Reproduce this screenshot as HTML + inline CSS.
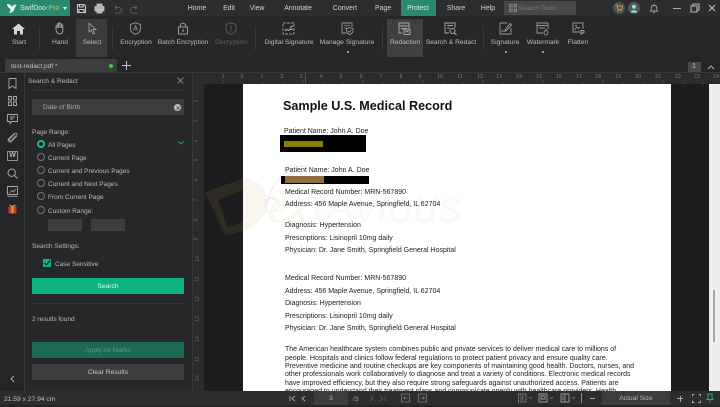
<!DOCTYPE html>
<html><head><meta charset="utf-8">
<style>
html,body{margin:0;padding:0;width:720px;height:405px;overflow:hidden;background:#242527;font-family:"Liberation Sans",sans-serif}
.a,.t,.d{position:absolute;white-space:nowrap}
.t{color:#b9babb;font-size:6.6px;line-height:10px;margin-top:1px}
.m{color:#d0d1d2;font-size:6.9px;line-height:10px;position:absolute;transform:translateX(-50%);top:4px}
.c{transform:translateX(-50%);text-align:center;top:38px;position:absolute;color:#b9babb;font-size:6.7px;line-height:10px;white-space:nowrap}
.d{color:#222;font-size:7px;line-height:10px;left:285px;margin-top:1px}
.r{position:absolute;width:8px;height:8px;border:1px solid #77787a;border-radius:50%;box-sizing:border-box}
.rt{position:absolute;left:48px;color:#b9babb;font-size:6.5px;line-height:10px;white-space:nowrap;margin-top:1.5px}
svg{position:absolute;overflow:visible}
.n{position:absolute;top:73px;color:#77787a;font-size:5.5px;line-height:8px;transform:translateX(-50%)}
.v{position:absolute;left:195px;color:#66676a;font-size:5px;line-height:6px;transform:rotate(-90deg)}
</style></head><body>
<!-- top bar -->
<div class="a" style="left:0;top:0;width:720px;height:16px;background:#2c2d2f"></div>
<div class="a" style="left:0;top:0;width:70px;height:16px;background:#2a8a6e"></div>
<svg style="left:6px;top:2px" width="12" height="12" viewBox="0 0 12 12"><path d="M1 2C4 2 5 3 6 5C7 3 9 2 11 3C9 4 9 6 8 8C7 10 5 11 3 11C5 9 5 7 3 6C2 5 1 4 1 2Z" fill="#e8f5f0"/></svg>
<div class="a" style="left:20px;top:4px;font-size:7px;line-height:10px;color:#d9ece6">SwifDoo<span style="color:#c8c96a">-Pro</span></div>
<div class="a" style="left:63px;top:7px;border:2.5px solid transparent;border-top:3px solid #dfe;border-bottom:0"></div>
<svg style="left:76px;top:3px" width="11" height="11" viewBox="0 0 11 11"><path d="M1.5 1.5H8L9.5 3V9.5H1.5Z M3.5 1.5V4H7V1.5 M3 9.5V6.5H8V9.5" fill="none" stroke="#c9cacb" stroke-width="1.1"/></svg>
<svg style="left:94px;top:3px" width="11" height="11" viewBox="0 0 11 11"><path d="M3 3V1H8V3 M1 3.5H10V8H8V6.5H3V8H1Z M3 6.5V10H8V6.5" fill="#b5b6b7" stroke="#c9cacb" stroke-width=".8"/></svg>
<svg style="left:112px;top:3px" width="11" height="11" viewBox="0 0 11 11"><path d="M3 4.5H7A2.7 2.7 0 0 1 7 10H3 M3 4.5L5 2.5 M3 4.5L5 6.5" fill="none" stroke="#5b5c5e" stroke-width="1"/></svg>
<svg style="left:129px;top:3px" width="11" height="11" viewBox="0 0 11 11"><path d="M8 4.5H4A2.7 2.7 0 0 0 4 10H8 M8 4.5L6 2.5 M8 4.5L6 6.5" fill="none" stroke="#5b5c5e" stroke-width="1"/></svg>
<div class="m" style="left:197px">Home</div>
<div class="m" style="left:229px">Edit</div>
<div class="m" style="left:257px">View</div>
<div class="m" style="left:298px">Annotate</div>
<div class="m" style="left:345px">Convert</div>
<div class="m" style="left:383px">Page</div>
<div class="a" style="left:401px;top:0;width:35px;height:16px;background:#2a8a6e"></div>
<div class="m" style="left:418px;color:#d6eee6">Protect</div>
<div class="m" style="left:456px">Share</div>
<div class="m" style="left:488px">Help</div>
<div class="a" style="left:504px;top:1px;width:72px;height:14px;background:#47484a"></div>
<svg style="left:509px;top:4px" width="8" height="8" viewBox="0 0 8 8"><path d="M.5 .5H3V3H.5Z M5 .5H7.5V3H5Z M.5 5H3V7.5H.5Z M5 5H7.5V7.5H5Z" fill="none" stroke="#98999a" stroke-width=".8"/></svg>
<div class="a" style="left:518px;top:4px;font-size:6.6px;line-height:10px;color:#77787a">Search Tools</div>
<div class="a" style="left:613px;top:2px;width:12px;height:12px;border-radius:50%;background:#4e4f4f"></div>
<svg style="left:615px;top:4px" width="8" height="8" viewBox="0 0 8 8"><path d="M.5 1H2L3 5.5H6.5L7.5 2H2.3" fill="none" stroke="#c79a2e" stroke-width="1"/><circle cx="3.2" cy="7" r=".8" fill="#c79a2e"/><circle cx="6" cy="7" r=".8" fill="#c79a2e"/></svg>
<div class="a" style="left:628px;top:2px;width:12px;height:12px;border-radius:50%;background:#55575a"></div>
<svg style="left:630px;top:3.5px" width="8" height="9" viewBox="0 0 8 9"><circle cx="4" cy="2.7" r="2" fill="#8fe6cf"/><path d="M.8 8.5C1 5.5 7 5.5 7.2 8.5Z" fill="#8fe6cf"/></svg>
<svg style="left:649px;top:3px" width="10" height="11" viewBox="0 0 10 11"><path d="M1.5 8C2.5 7 2.3 5.5 2.5 4C2.8 2 7.2 2 7.5 4C7.7 5.5 7.5 7 8.5 8Z M4 9.5H6 M5 1V2" fill="none" stroke="#a6a7a8" stroke-width=".9"/></svg>
<div class="a" style="left:673px;top:8px;width:8px;height:1px;background:#a9aaab"></div>
<svg style="left:690px;top:3px" width="10" height="10" viewBox="0 0 10 10"><path d="M3 3V1H9V7H7 M1 3H7V9H1Z" fill="none" stroke="#b5b6b7" stroke-width="1.1"/></svg>
<svg style="left:708px;top:4px" width="8" height="8" viewBox="0 0 8 8"><path d="M1 1L7 7M7 1L1 7" stroke="#c6c7c8" stroke-width="1"/></svg>

<!-- ribbon -->
<div class="a" style="left:0;top:16px;width:720px;height:41px;background:#262729"></div>
<div class="a" style="left:76px;top:19px;width:31px;height:38px;background:#3a3b3d"></div>
<div class="a" style="left:387px;top:19px;width:36px;height:38px;background:#3f4042"></div>
<div class="a" style="left:39px;top:26px;width:1px;height:24px;background:#38393b"></div>
<div class="a" style="left:112px;top:26px;width:1px;height:24px;background:#38393b"></div>
<div class="a" style="left:255px;top:26px;width:1px;height:24px;background:#38393b"></div>
<div class="a" style="left:382px;top:26px;width:1px;height:24px;background:#38393b"></div>
<div class="a" style="left:483px;top:26px;width:1px;height:24px;background:#38393b"></div>
<!-- icons -->
<svg style="left:12px;top:23px" width="13" height="12" viewBox="0 0 13 12"><path d="M6.5 .5L13 6H11V11.5H8V8H5V11.5H2V6H0Z" fill="#d3d4d5"/></svg>
<svg style="left:54px;top:22px" width="12" height="13" viewBox="0 0 12 13"><path d="M2 8V4.5C2 3.5 3.2 3.5 3.2 4.5V2.5C3.2 1.5 4.6 1.5 4.6 2.5V1.5C4.6 .5 6 .5 6 1.5V2.5C6 1.5 7.4 1.5 7.4 2.5V3.5C7.4 2.7 8.8 2.7 8.8 3.5V8C8.8 10.5 7.5 12 5.5 12C3.5 12 2.8 10.5 2 8Z M3.2 4.5V6 M4.6 2.5V6 M6 2.5V6 M7.4 3.5V6" fill="none" stroke="#a9aaab" stroke-width=".9"/></svg>
<svg style="left:88px;top:22px" width="10" height="13" viewBox="0 0 10 13"><path d="M1 1V10L3.3 8L5 12L6.5 11.3L4.8 7.5H8Z" fill="none" stroke="#9b9c9e" stroke-width=".9"/></svg>
<svg style="left:129px;top:22px" width="13" height="13" viewBox="0 0 13 13"><path d="M6.5 .8L11.5 2.5V7C11.5 10 9 11.5 6.5 12.3C4 11.5 1.5 10 1.5 7V2.5Z" fill="none" stroke="#98999a" stroke-width=".9"/><path d="M4.5 8.5L6.5 3.8L8.5 8.5M5.3 7H7.7" fill="none" stroke="#98999a" stroke-width=".8"/></svg>
<svg style="left:177px;top:22px" width="12" height="13" viewBox="0 0 12 13"><rect x="1.5" y="5" width="9" height="7" fill="none" stroke="#98999a" stroke-width="1"/><path d="M3.5 5V3.2C3.5 .6 8.5 .6 8.5 3.2V5" fill="none" stroke="#98999a" stroke-width="1"/><rect x="5.2" y="7.5" width="1.6" height="2" fill="#98999a"/></svg>
<svg style="left:225px;top:22px" width="12" height="13" viewBox="0 0 12 13"><path d="M6 .8L11 2.5V7C11 10 8.5 11.5 6 12.3C3.5 11.5 1 10 1 7V2.5Z" fill="none" stroke="#5d5e60" stroke-width=".9"/><path d="M6 3.5V7.5M6 8.5V9.5" stroke="#5d5e60" stroke-width="1"/></svg>
<svg style="left:282px;top:22px" width="13" height="13" viewBox="0 0 13 13"><path d="M1 1H12V12H1Z" fill="none" stroke="#98999a" stroke-width=".9" stroke-dasharray="3 1"/><path d="M3 9C5 5 6 10 7 8C8 6.5 9 8 11 7 M8 6L10.5 3.5" fill="none" stroke="#b8b9ba" stroke-width="1"/></svg>
<svg style="left:341px;top:22px" width="13" height="13" viewBox="0 0 13 13"><path d="M1 1H11V5 M1 1V11H5" fill="none" stroke="#98999a" stroke-width=".9"/><path d="M3 3.5H9 M3 6H6" stroke="#98999a" stroke-width=".8"/><path d="M8.5 5.5L12 6.8V9C12 11 10 12 8.5 12.6C7 12 5.5 11 5.5 9V6.8Z M7 9L8.3 10.2L10.3 8" fill="none" stroke="#a9aaab" stroke-width=".8"/></svg>
<svg style="left:398px;top:22px" width="13" height="13" viewBox="0 0 13 13"><path d="M4 11H1V1H11V6 M1 4H11 M3 6.5H8" fill="none" stroke="#a9aaab" stroke-width=".9"/><path d="M6 7H12V12.5H6Z" fill="none" stroke="#a9aaab" stroke-width=".9"/><path d="M8 7V10L9 9.2L10 10V7" fill="none" stroke="#a9aaab" stroke-width=".7"/></svg>
<svg style="left:444px;top:22px" width="13" height="13" viewBox="0 0 13 13"><path d="M5 11H1V1H11V6 M3 3.5H9 M3 6H6" fill="none" stroke="#a9aaab" stroke-width=".9"/><circle cx="8.5" cy="9" r="2.5" fill="none" stroke="#a9aaab"/><path d="M10.3 10.8L12.5 13" stroke="#a9aaab"/></svg>
<svg style="left:499px;top:22px" width="13" height="13" viewBox="0 0 13 13"><path d="M8 1H1V12H12V6" fill="none" stroke="#98999a" stroke-width=".9"/><path d="M6 8L11 1.5L12.5 3L7 9Z" fill="none" stroke="#a9aaab" stroke-width=".8"/><path d="M2.5 10C4 7 5 10.5 6 9" fill="none" stroke="#a9aaab" stroke-width=".8"/></svg>
<svg style="left:536px;top:22px" width="13" height="13" viewBox="0 0 13 13"><path d="M7 11H1V1H12V7 M1 3.5H12 M3 6H9" fill="none" stroke="#98999a" stroke-width=".9"/><path d="M10 7.5C11.5 9.5 12 10 12 11A2 2 0 0 1 8 11C8 10 8.5 9.5 10 7.5Z" fill="none" stroke="#a9aaab" stroke-width=".8"/></svg>
<svg style="left:572px;top:22px" width="13" height="13" viewBox="0 0 13 13"><path d="M8 10H1V1H11V7" fill="none" stroke="#98999a" stroke-width=".9"/><path d="M2.5 8L5 5L6.5 6.5L8 5" fill="none" stroke="#a9aaab" stroke-width=".8"/><circle cx="4" cy="3.5" r=".8" fill="#a9aaab"/><path d="M9 13V8.5H11C12.5 8.5 12.5 11 11 11H9" fill="none" stroke="#a9aaab" stroke-width=".9"/></svg>
<div class="c" style="left:19px">Start</div>
<div class="c" style="left:60px">Hand</div>
<div class="c" style="left:92px">Select</div>
<div class="c" style="left:136px">Encryption</div>
<div class="c" style="left:183px">Batch Encryption</div>
<div class="c" style="left:231px;color:#5d5e60">Decryption</div>
<div class="c" style="left:289px">Digital Signature</div>
<div class="c" style="left:347px">Manage Signature</div>
<div class="c" style="left:405px">Redaction</div>
<div class="c" style="left:451px">Search &amp; Redact</div>
<div class="c" style="left:505px">Signature</div>
<div class="c" style="left:543px">Watermark</div>
<div class="c" style="left:578px">Flatten</div>
<div class="a" style="left:347px;top:51px;width:1.5px;height:1.5px;background:#98999a"></div>
<div class="a" style="left:505px;top:51px;width:1.5px;height:1.5px;background:#98999a"></div>
<div class="a" style="left:542px;top:51px;width:1.5px;height:1.5px;background:#98999a"></div>

<!-- tab row -->
<div class="a" style="left:5px;top:59px;width:112px;height:13px;background:#3c3d3f;border-radius:2px 2px 0 0"></div>
<div class="a" style="left:11px;top:62px;color:#c0c1c2;font-size:6.6px;line-height:10px">test-redact.pdf *</div>
<div class="a" style="left:109px;top:64px;width:4px;height:4px;border-radius:50%;background:#3fd03f"></div>
<div class="a" style="left:122px;top:65px;width:9px;height:1px;background:#c6c7c8"></div>
<div class="a" style="left:126px;top:61px;width:1px;height:9px;background:#c6c7c8"></div>
<div class="a" style="left:688px;top:62px;width:13px;height:10px;background:#48494b"></div>
<div class="a" style="left:692px;top:62px;color:#c6c7c8;font-size:7px;line-height:10px">1</div>
<svg style="left:707px;top:65px" width="8" height="5" viewBox="0 0 8 5"><path d="M1 4L4 1L7 4" fill="none" stroke="#b5b6b7" stroke-width="1"/></svg>

<!-- left rail and panel -->
<div class="a" style="left:0;top:72px;width:24px;height:319px;background:#242527;border-right:1px solid #37383a"></div>
<div class="a" style="left:25px;top:72px;width:167px;height:319px;background:#262729;border-right:1px solid #37383a"></div>
<div class="a" style="left:0;top:72px;width:720px;height:1px;background:#37383a"></div>
<svg style="left:8px;top:78px" width="9" height="11" viewBox="0 0 9 11"><path d="M1 .5H8V10.5L4.5 8L1 10.5Z" fill="none" stroke="#a9aaab" stroke-width=".9"/></svg>
<svg style="left:8px;top:96px" width="9" height="10" viewBox="0 0 9 10"><path d="M.5 .5H3.5V4H.5Z M5.5 .5H8.5V4H5.5Z M.5 6H3.5V9.5H.5Z M5.5 6H8.5V9.5H5.5Z" fill="none" stroke="#a9aaab" stroke-width=".9"/></svg>
<svg style="left:7px;top:114px" width="11" height="10" viewBox="0 0 11 10"><path d="M.5 .5H10.5V7.5H5L3 9.5V7.5H.5Z M3 3H8 M3 5H6" fill="none" stroke="#a9aaab" stroke-width=".9"/></svg>
<svg style="left:7px;top:132px" width="11" height="11" viewBox="0 0 11 11"><path d="M9.5 3L4 8.5C3 9.5 1.5 8 2.5 7L8 1.5C9 .5 10.5 2 9.5 3Z M7 1.5L1.5 7C0 9 2.5 11 4.5 9.5L10 4" fill="none" stroke="#a9aaab" stroke-width=".8"/></svg>
<div class="a" style="left:7px;top:151px;width:11px;height:10px;border:1px solid #8f9091;box-sizing:border-box;color:#b5b6b7;font-size:7px;line-height:8px;text-align:center;font-weight:bold">W</div>
<svg style="left:7px;top:168px" width="11" height="11" viewBox="0 0 11 11"><circle cx="4.7" cy="4.7" r="3.7" fill="none" stroke="#a9aaab"/><path d="M7.5 7.5L10.5 10.5" stroke="#a9aaab"/></svg>
<svg style="left:7px;top:186px" width="11" height="11" viewBox="0 0 11 11"><path d="M.5 .5H10.5V8.5H.5Z M.5 10.3H10.5" fill="none" stroke="#a9aaab" stroke-width=".9"/><path d="M2.5 7L5 4.5L6.5 6L8.5 3" fill="none" stroke="#a9aaab" stroke-width=".8"/></svg>
<svg style="left:8px;top:204px" width="9" height="10" viewBox="0 0 9 10"><rect x=".5" y="2.5" width="8" height="7" fill="#c33b2c"/><rect x="3.5" y="2.5" width="2" height="7" fill="#d9a12a"/><path d="M1.5 1L4.5 2.5L7.5 1" fill="none" stroke="#d9a12a"/></svg>
<svg style="left:10px;top:375px" width="5" height="8" viewBox="0 0 5 8"><path d="M4 1L1 4L4 7" fill="none" stroke="#a9aaab" stroke-width="1"/></svg>

<div class="t" style="left:28px;top:76px;color:#b9babb">Search &amp; Redact</div>
<svg style="left:177px;top:77px" width="7" height="7" viewBox="0 0 7 7"><path d="M.5 .5L6.5 6.5M6.5 .5L.5 6.5" stroke="#98999a" stroke-width=".8"/></svg>
<div class="a" style="left:32px;top:90px;width:152px;height:1px;background:#353638"></div>
<div class="a" style="left:32px;top:99px;width:152px;height:16px;background:#3c3d3f"></div>
<div class="a" style="left:43px;top:103px;color:#a8a9aa;font-size:6.7px;line-height:10px">Date of Birth</div>
<div class="a" style="left:174px;top:104px;width:7px;height:7px;border-radius:50%;background:#c0c1c2"></div>
<svg style="left:175.5px;top:105.5px" width="4" height="4" viewBox="0 0 4 4"><path d="M.5 .5L3.5 3.5M3.5 .5L.5 3.5" stroke="#3c3d3f" stroke-width=".8"/></svg>
<div class="rt" style="left:32px;top:126px">Page Range:</div>
<div class="r" style="left:37px;top:140px;border:2.5px solid #14c08f;background:#1a1b1c"></div>
<div class="rt" style="top:139px">All Pages</div>
<svg style="left:178px;top:141px" width="6" height="4" viewBox="0 0 6 4"><path d="M.5 .5L3 3L5.5 .5" fill="none" stroke="#14b184" stroke-width=".9"/></svg>
<div class="r" style="left:37px;top:153px"></div><div class="rt" style="top:152px">Current Page</div>
<div class="r" style="left:37px;top:166px"></div><div class="rt" style="top:165px">Current and Previous Pages</div>
<div class="r" style="left:37px;top:179px"></div><div class="rt" style="top:178px">Current and Next Pages</div>
<div class="r" style="left:37px;top:192px"></div><div class="rt" style="top:191px">From Current Page</div>
<div class="r" style="left:37px;top:206px"></div><div class="rt" style="top:205px">Custom Range:</div>
<div class="a" style="left:48px;top:219px;width:34px;height:12px;background:#3c3d3f"></div>
<div class="a" style="left:91px;top:219px;width:34px;height:12px;background:#3c3d3f"></div>
<div class="rt" style="left:32px;top:240px">Search Settings:</div>
<div class="a" style="left:43px;top:259px;width:8px;height:8px;background:#14b184"></div>
<svg style="left:44px;top:260px" width="7" height="6" viewBox="0 0 7 6"><path d="M.5 3L2.5 5L6 .5" fill="none" stroke="#1a1b1c" stroke-width="1.2"/></svg>
<div class="rt" style="left:55px;top:258px">Case Sensitive</div>
<div class="a" style="left:32px;top:278px;width:152px;height:16px;background:#0db283;color:#e0f6ee;font-size:6.7px;line-height:18px;text-align:center">Search</div>
<div class="a" style="left:32px;top:303px;width:152px;height:1px;background:#353638"></div>
<div class="rt" style="left:32px;top:313px">2 results found</div>
<div class="a" style="left:32px;top:342px;width:152px;height:16px;background:#1c6a54;color:#5e9685;font-size:6.7px;line-height:18px;text-align:center">Apply All Marks</div>
<div class="a" style="left:32px;top:364px;width:152px;height:16px;background:#3c3d3f;color:#c6c7c8;font-size:6.7px;line-height:18px;text-align:center">Clear Results</div>

<!-- rulers -->
<div class="a" style="left:193px;top:73px;width:527px;height:11px;background:#2a2b2d"></div>
<div class="a" style="left:193px;top:84px;width:50px;height:307px;background:#1c1d1e"></div>
<div class="a" style="left:193px;top:84px;width:11px;height:307px;background:#2a2b2d"></div>
<div class="a" style="left:671px;top:84px;width:38px;height:307px;background:#1c1d1e"></div>
<svg style="left:193px;top:73px" width="516" height="11"><path stroke="#56575a" stroke-width=".6" d="M30 7v4M50 9v2M70 9v2M90 9v2M110 7v4M130 9v2M150 9v2M170 7v4M190 9v2M210 9v2M230 7v4M250 9v2M270 9v2M290 7v4M310 9v2M330 9v2M350 7v4M370 9v2M390 9v2M410 7v4M430 9v2M450 9v2M470 7v4M490 9v2M510 9v2"/></svg>
<div class="a" style="left:305px;top:73px;width:1px;height:11px;background:#505153"></div>
<div class="n" style="left:223px">1</div><div class="n" style="left:242px">0</div><div class="n" style="left:262px">1</div><div class="n" style="left:282px">2</div><div class="n" style="left:301px">3</div><div class="n" style="left:321px">4</div><div class="n" style="left:341px">5</div><div class="n" style="left:361px">6</div><div class="n" style="left:381px">7</div><div class="n" style="left:401px">8</div><div class="n" style="left:420px">9</div><div class="n" style="left:440px">10</div><div class="n" style="left:460px">11</div><div class="n" style="left:480px">12</div><div class="n" style="left:499px">13</div><div class="n" style="left:519px">14</div><div class="n" style="left:539px">15</div><div class="n" style="left:559px">16</div><div class="n" style="left:579px">17</div><div class="n" style="left:598px">18</div><div class="n" style="left:618px">19</div><div class="n" style="left:638px">20</div><div class="n" style="left:658px">21</div><div class="n" style="left:678px">22</div><div class="n" style="left:697px">23</div><div class="n" style="left:716px">24</div>
<div class="v" style="top:98px">2</div><div class="v" style="top:118px">3</div><div class="v" style="top:138px">4</div><div class="v" style="top:157px">5</div><div class="v" style="top:177px">6</div><div class="v" style="top:197px">7</div><div class="v" style="top:217px">8</div><div class="v" style="top:236px">9</div><div class="v" style="top:256px">10</div><div class="v" style="top:276px">11</div><div class="v" style="top:296px">12</div><div class="v" style="top:316px">13</div><div class="v" style="top:336px">14</div><div class="v" style="top:356px">15</div><div class="v" style="top:375px">16</div>

<!-- document -->
<div class="a" style="left:243px;top:84px;width:428px;height:307px;background:#fff;overflow:hidden"></div>
<!-- watermark -->
<svg style="left:200px;top:160px" width="310" height="90" viewBox="0 0 310 90">
<path fill-rule="evenodd" d="M5 32L45 18C62 20 72 35 66 52C60 65 45 72 25 75ZM18 40L43 30V62L28 68Z" fill="#c9a24a" fill-opacity=".1"/>
<path d="M68 42C72 20 88 6 108 6M75 40C62 30 62 60 76 50C84 44 70 30 68 42" fill="none" stroke="#e4e4e0" stroke-width=".8"/>
<text x="68" y="62" font-family="Liberation Serif,serif" font-style="italic" font-size="46" fill="#fbf7ec">ex</text>
<text x="112" y="62" font-family="Liberation Sans,sans-serif" font-style="italic" font-size="46" fill="#f9f9f7">tAvious</text>
</svg>
<div class="a" style="left:283px;top:98px;font-size:12.6px;line-height:16px;font-weight:bold;color:#111">Sample U.S. Medical Record</div>
<div class="d" style="left:284px;top:126px">Patient Name: John A. Doe</div>
<div class="a" style="left:280px;top:135px;width:86px;height:17px;background:#000"></div>
<div class="a" style="left:284px;top:141px;width:39px;height:6px;background:#8a7d00"></div>
<div class="d" style="top:165px">Patient Name: John A. Doe</div>
<div class="a" style="left:281px;top:176px;width:88px;height:8px;background:#000"></div>
<div class="a" style="left:285px;top:176px;width:39px;height:6.5px;background:#8e6c3c"></div>
<div class="d" style="top:187px">Medical Record Number: MRN-567890</div>
<div class="d" style="top:199px">Address: 456 Maple Avenue, Springfield, IL 62704</div>
<div class="d" style="top:220px">Diagnosis: Hypertension</div>
<div class="d" style="top:233px">Prescriptions: Lisinopril 10mg daily</div>
<div class="d" style="top:245px">Physician: Dr. Jane Smith, Springfield General Hospital</div>
<div class="d" style="top:273px">Medical Record Number: MRN-567890</div>
<div class="d" style="top:286px">Address: 456 Maple Avenue, Springfield, IL 62704</div>
<div class="d" style="top:298px">Diagnosis: Hypertension</div>
<div class="d" style="top:311px">Prescriptions: Lisinopril 10mg daily</div>
<div class="d" style="top:323px">Physician: Dr. Jane Smith, Springfield General Hospital</div>
<div class="d" style="top:344px">The American healthcare system combines public and private services to deliver medical care to millions of</div>
<div class="d" style="top:352.5px">people. Hospitals and clinics follow federal regulations to protect patient privacy and ensure quality care.</div>
<div class="d" style="top:361px">Preventive medicine and routine checkups are key components of maintaining good health. Doctors, nurses, and</div>
<div class="d" style="top:369px">other professionals work collaboratively to diagnose and treat a variety of conditions. Electronic medical records</div>
<div class="d" style="top:378px">have improved efficiency, but they also require strong safeguards against unauthorized access. Patients are</div>
<div class="d" style="top:386px">encouraged to understand their treatment plans and communicate openly with healthcare providers. Health</div>

<!-- scrollbar -->
<div class="a" style="left:709px;top:84px;width:11px;height:307px;background:#ededed"></div>
<div class="a" style="left:713px;top:290px;width:2px;height:52px;background:#a8a8a8"></div>

<!-- status -->
<div class="a" style="left:0;top:391px;width:720px;height:14px;background:#2c2d2f"></div>
<div class="a" style="left:4px;top:395px;color:#c0c1c2;font-size:6.7px;line-height:10px">21.59 x 27.94 cm</div>
<svg style="left:289px;top:395px" width="20" height="7" viewBox="0 0 20 7"><path d="M1 1V6M6 1L3 3.5L6 6M16 1L13 3.5L16 6" fill="none" stroke="#a9aaab" stroke-width=".9"/></svg>
<div class="a" style="left:314px;top:391px;width:34px;height:14px;background:#3c3d3f;color:#b9babb;font-size:6.7px;line-height:16px;text-align:center">3</div>
<div class="a" style="left:353px;top:395px;color:#a9aaab;font-size:6.7px;line-height:10px">/3</div>
<svg style="left:369px;top:395px" width="20" height="7" viewBox="0 0 20 7"><path d="M1 1L4 3.5L1 6M11 1L14 3.5L11 6M16 1V6" fill="none" stroke="#55565a" stroke-width=".9"/></svg>
<svg style="left:401px;top:393px" width="26" height="10" viewBox="0 0 26 10"><path d="M.5 1H8.5V9H.5Z M6.5 5H2.5M4 3.5L2.5 5L4 6.5 M17.5 1H25.5V9H17.5Z M19.5 5H23.5M22 3.5L23.5 5L22 6.5" fill="none" stroke="#7b7c7e" stroke-width=".8"/></svg>
<svg style="left:518px;top:393px" width="60" height="10" viewBox="0 0 60 10"><path d="M.5 1H8V9H.5Z M2.5 3H6M2.5 5H6M2.5 7H6" fill="none" stroke="#98999a" stroke-width="1" stroke-dasharray="1 .6"/><path d="M11 4L12.5 5.5L14 4" fill="none" stroke="#7b7c7e" stroke-width=".7"/><path d="M21 1H29V9H21Z M23 3H27V6H23Z" fill="none" stroke="#98999a" stroke-width=".9"/><path d="M32 4L33.5 5.5L35 4" fill="none" stroke="#7b7c7e" stroke-width=".7"/><path d="M43 1H51V9H43Z M47 1V9 M45 3V7" fill="none" stroke="#98999a" stroke-width=".9"/><path d="M54 4L55.5 5.5L57 4" fill="none" stroke="#7b7c7e" stroke-width=".7"/></svg>
<div class="a" style="left:581px;top:393px;width:1px;height:10px;background:#8a8b8c"></div>
<div class="a" style="left:590px;top:398px;width:5px;height:1px;background:#a9aaab"></div>
<div class="a" style="left:602px;top:391px;width:68px;height:14px;background:#3c3d3f;color:#b5b6b7;font-size:6.7px;line-height:16px;text-align:center">Actual Size</div>
<div class="a" style="left:677px;top:398px;width:6px;height:1px;background:#a9aaab"></div>
<div class="a" style="left:679.5px;top:395.5px;width:1px;height:6px;background:#a9aaab"></div>
<svg style="left:692px;top:394px" width="9" height="9" viewBox="0 0 9 9"><path d="M.5 2.5V.5H2.5M6.5 .5H8.5V2.5M8.5 6.5V8.5H6.5M2.5 8.5H.5V6.5" fill="none" stroke="#a9aaab" stroke-width=".9"/></svg>
<svg style="left:706px;top:393px" width="8" height="10" viewBox="0 0 8 10"><path d="M2 1H6V5L7 6.5H1L2 5Z M4 6.5V9.5" fill="none" stroke="#1fb57f" stroke-width="1"/></svg>
</body></html>
